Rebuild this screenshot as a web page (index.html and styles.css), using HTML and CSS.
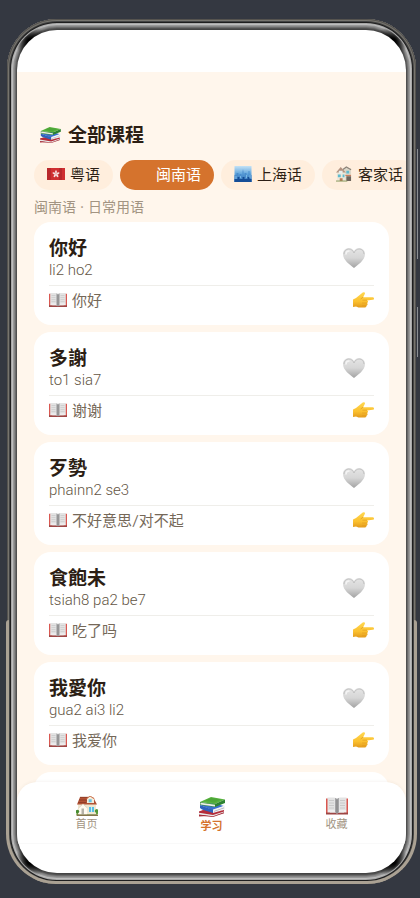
FILE: index.html
```html
<!DOCTYPE html>
<html lang="zh-CN">
<head>
  <meta charset="UTF-8">
  <meta name="viewport" content="width=device-width, initial-scale=1">
  <title>全部课程</title>
  <link rel="stylesheet" href="styles.css">
</head>
<body>
  <!-- icon sprites -->
  <svg class="sprites" aria-hidden="true">
    <defs>
      <linearGradient id="silver" x1="0" y1="0" x2="0" y2="1">
        <stop offset="0" stop-color="#e6e6e6"/>
        <stop offset="0.5" stop-color="#d6d6d6"/>
        <stop offset="1" stop-color="#a2a2a2"/>
      </linearGradient>
      <linearGradient id="skin" x1="0" y1="0" x2="0" y2="1">
        <stop offset="0" stop-color="#ffd850"/>
        <stop offset="0.6" stop-color="#fbc02f"/>
        <stop offset="1" stop-color="#e29a1c"/>
      </linearGradient>
      <linearGradient id="sky" x1="0" y1="0" x2="0" y2="1">
        <stop offset="0" stop-color="#c4e2f6"/>
        <stop offset="0.5" stop-color="#5fa4dc"/>
        <stop offset="1" stop-color="#1858a8"/>
      </linearGradient>
    </defs>
    <symbol id="books" viewBox="0 0 27 20">
      <path d="M1 15l9-3 16 1-9 5.500-16 1z" fill="#a82834"/>
      <path d="M1 15l13 2 12-4v3l-11 3.500L1 18z" fill="#e9e9e9"/>
      <path d="M1 14.500l4-1.500 11 2.500 10-2.500v1.500L15 18 1 15.700z" fill="#b52c3a"/>
      <path d="M1 17.500l14 1.800 11-4v1L15 20 1 18.500z" fill="#a02531"/>
      <path d="M2 8l13-2 11 3-11 4.500z" fill="#3b70cf"/>
      <path d="M2 8l13 5v3L4 12.500 2 11z" fill="#2f62bc"/>
      <path d="M15 12.500L27 8.500v4L15 16z" fill="#f3f3f3"/>
      <path d="M16 14l10-3.500v.7L16 14.700z" fill="#aab"/>
      <path d="M2 5L13 0l14 2.500L17 7z" fill="#57b23e"/>
      <path d="M7 3.500L13 1l10 1.500-7 3z" fill="#4da638"/>
      <path d="M17 7l10-4.500V6L17 10z" fill="#2c8230"/>
      <path d="M2 5l15 2v3L2 8z" fill="#3a9035"/>
      <path d="M2.500 5.700L17 7.800V9.500L2.500 7.500z" fill="#eeeeea"/>
    </symbol>
    <symbol id="book" viewBox="0 0 22 17">
      <path d="M0 1h4v15H0zM18 1h4v15h-4z" fill="#d95750"/>
      <path d="M0 15h10l1 1 1-1h10v2H0z" fill="#9d4644"/>
      <path d="M1.500 0H8q2.500 0 3 1.500Q11.500 0 14 0h6.500v15H13l-2 1-2-1H1.500z" fill="#e3e3e3"/>
      <path d="M9 0.500q1.500 0 2 1.200v14L9 15zM13 0.500q-1.500 0-2 1.200v14l2-.7z" fill="#a5a5a7"/>
      <path d="M10.700 2h.6v14h-.6z" fill="#666"/>
      <path d="M3 3h5M3 5.500h5M3 8h5M3 10.500h5M14 3h5M14 5.500h5M14 8h5M14 10.500h5" stroke="#c4c4c4" stroke-width=".8"/>
      <path d="M2 13.500h7M13 13.500h7" stroke="#fff" stroke-width=".8"/>
    </symbol>
    <symbol id="heart" viewBox="0 0 22 20">
      <path d="M11 20C7 16.500 0 12.500 0 6 0 2.500 2.500 0 5.800 0 8.200 0 10 1.200 11 3c1-1.800 2.800-3 5.200-3C19.500 0 22 2.500 22 6c0 6.500-7 10.500-11 14z" fill="url(#silver)"/>
      <path d="M1 6C1 3 3.200 1 5.800 1 8 1 9.800 2.200 11 5c1.200-2.800 3-4 5.200-4C18.800 1 21 3 21 6" fill="none" stroke="#bababa" stroke-width=".8"/>
      <path d="M3 6c0-2 1.500-3 3-3" fill="none" stroke="#f4f4f4" stroke-width="1.500" stroke-linecap="round"/>
    </symbol>
    <symbol id="hand" viewBox="0 0 21 16">
      <path d="M0 7.500L3 6 8.500 1.500Q10.500-.4 11.700.6c.8.8-.2 2.200-1.200 3.700l-.3.900h9.300c2 0 2 2.600 0 2.600L14 8.400c1.500.6 1.300 2.400 0 2.700 1 .8.700 2.200-.6 2.500.4 1.500-.9 2-2.400 2H5.500L3 14.600 0 15z" fill="url(#skin)"/>
      <path d="M14 8.200H9.500M14 11H9M13.300 13.500H9" stroke="#e09a20" stroke-width=".6" fill="none"/>
      <path d="M10.200 5l-2.500 2" stroke="#dd991f" stroke-width=".7"/>
    </symbol>
    <symbol id="house" viewBox="0 0 22 20">
      <path d="M0 16q2-3 4-1h15q1-3 3-1v4l-4 2H1z" fill="#68a43e"/>
      <path d="M2 8h18v10.500H2z" fill="#f0e8d2"/>
      <path d="M1 8.500L4 1h13l4 7.500z" fill="#b15235"/>
      <path d="M4 1.300h12M3 4h9M2 6.500h8" stroke="#8c3824" stroke-width=".8"/>
      <path d="M11 7V2.500L14 0l4 2.500V7z" fill="#f5eddb"/>
      <path d="M10.500 3L14 0l4.500 3" fill="none" stroke="#cf7650"/>
      <path d="M12.700 3.300h3v3h-3z" fill="#65c2e4"/>
      <path d="M3 12l4-4 4 4v6.500H3z" fill="#fffaf0"/>
      <path d="M2.500 12L7 8l4.500 4" fill="none" stroke="#e0d6c6" stroke-width="1"/>
      <path d="M5.500 12.500h2.500v6H5.500z" fill="#b5b2a8"/>
      <path d="M13 11h5v5h-5z" fill="#56bfe5"/>
      <path d="M15.500 11v5" stroke="#fff" stroke-width=".7"/>
      <path d="M0 18.500h22V20H1z" fill="#85754d"/>
      <circle cx="1.500" cy="15.500" r="1.700" fill="#488c32"/>
      <circle cx="20.500" cy="15" r="1.800" fill="#509638"/>
    </symbol>
    <symbol id="flag" viewBox="0 0 18 12">
      <path d="M0 0h18v12H0z" fill="#cf2e30"/>
      <path d="M0 0h4v12H0zM12 0h3v12h-3z" fill="#b8272b"/>
      <g fill="#f6dfdf">
        <ellipse cx="9" cy="4" rx=".9" ry="1.700"/>
        <ellipse cx="9" cy="4" rx=".9" ry="1.700" transform="rotate(72 9 6)"/>
        <ellipse cx="9" cy="4" rx=".9" ry="1.700" transform="rotate(144 9 6)"/>
        <ellipse cx="9" cy="4" rx=".9" ry="1.700" transform="rotate(216 9 6)"/>
        <ellipse cx="9" cy="4" rx=".9" ry="1.700" transform="rotate(288 9 6)"/>
      </g>
    </symbol>
    <symbol id="city" viewBox="0 0 17 16">
      <path d="M0 0h17v16H0z" fill="url(#sky)"/>
      <path d="M0 16V9h2V7h2v3h1V8h2v3h1V6l.5-3 .5 3v5h1V7h2v4h2V5h1v4h2v7z" fill="#4a8ccc"/>
      <path d="M0 16v-3h3v-2h2v2h3v-2h2v2h3v-2h2v2h2v3z" fill="#154d96"/>
      <path d="M1.500 10v3M6 10v2M12 9v3M15.500 9v3" stroke="#8dc8ed" stroke-width=".7"/>
    </symbol>
    <symbol id="houses" viewBox="0 0 17 17">
      <path d="M8 3l3-2 5 2v12H8z" fill="#dcd7c8"/>
      <path d="M7 4l4-3 5 3" fill="none" stroke="#8d8479" stroke-width="1.300"/>
      <path d="M1 7l4-5 5 5v9H1z" fill="#ede7d8"/>
      <path d="M0 7l5-6 5.500 6z" fill="#b3927f"/>
      <path d="M3 5h4v3H3z" fill="#e7f0ef"/>
      <path d="M2 9h3v3H2zM7 9h2v3H7zM11 5h3v3h-3z" fill="#5fbbcf"/>
      <path d="M11 11h5v5h-5z" fill="#6d645c"/>
      <path d="M10 10h6" stroke="#c86d4a"/>
      <path d="M4 13h3v3H4z" fill="#b97b55"/>
      <path d="M0 16h12" stroke="#829458" stroke-width="1"/>
    </symbol>
  </svg>

  <div class="phone">
    <span class="side-key volume"></span>
    <span class="side-key power"></span>
    <div class="screen">
      <div class="status-bar"></div>

      <main>
        <h1><svg><use href="#books"/></svg>全部课程</h1>

        <div class="chips">
          <button class="chip"><svg><use href="#flag"/></svg>粤语</button>
          <button class="chip active"><svg></svg>闽南语</button>
          <button class="chip"><svg><use href="#city"/></svg>上海话</button>
          <button class="chip"><svg><use href="#houses"/></svg>客家话</button>
        </div>

        <p class="subtitle">闽南语 · 日常用语</p>

        <div class="cards">
          <article class="card">
            <div class="card-top">
              <div>
                <h2 lang="zh-TW">你好</h2>
                <p class="pinyin">li2 ho2</p>
              </div>
              <button class="fav" aria-label="收藏"><svg><use href="#heart"/></svg></button>
            </div>
            <div class="card-bottom"><svg class="mean"><use href="#book"/></svg>你好<svg class="go"><use href="#hand"/></svg></div>
          </article>

          <article class="card">
            <div class="card-top">
              <div>
                <h2 lang="zh-TW">多謝</h2>
                <p class="pinyin">to1 sia7</p>
              </div>
              <button class="fav" aria-label="收藏"><svg><use href="#heart"/></svg></button>
            </div>
            <div class="card-bottom"><svg class="mean"><use href="#book"/></svg>谢谢<svg class="go"><use href="#hand"/></svg></div>
          </article>

          <article class="card">
            <div class="card-top">
              <div>
                <h2 lang="zh-TW">歹勢</h2>
                <p class="pinyin">phainn2 se3</p>
              </div>
              <button class="fav" aria-label="收藏"><svg><use href="#heart"/></svg></button>
            </div>
            <div class="card-bottom"><svg class="mean"><use href="#book"/></svg>不好意思/对不起<svg class="go"><use href="#hand"/></svg></div>
          </article>

          <article class="card">
            <div class="card-top">
              <div>
                <h2 lang="zh-TW">食飽未</h2>
                <p class="pinyin">tsiah8 pa2 be7</p>
              </div>
              <button class="fav" aria-label="收藏"><svg><use href="#heart"/></svg></button>
            </div>
            <div class="card-bottom"><svg class="mean"><use href="#book"/></svg>吃了吗<svg class="go"><use href="#hand"/></svg></div>
          </article>

          <article class="card">
            <div class="card-top">
              <div>
                <h2 lang="zh-TW">我愛你</h2>
                <p class="pinyin">gua2 ai3 li2</p>
              </div>
              <button class="fav" aria-label="收藏"><svg><use href="#heart"/></svg></button>
            </div>
            <div class="card-bottom"><svg class="mean"><use href="#book"/></svg>我爱你<svg class="go"><use href="#hand"/></svg></div>
          </article>

          <article class="card next"></article>
        </div>
      </main>

      <nav class="tabs">
        <a href="#home"><svg><use href="#house"/></svg>首页</a>
        <a href="#learn" class="active"><svg><use href="#books"/></svg>学习</a>
        <a href="#saved"><svg><use href="#book"/></svg>收藏</a>
      </nav>
      <div class="home-bar"></div>
    </div>
  </div>
</body>
</html>
```
FILE: styles.css
```css
* { box-sizing: border-box; margin: 0; padding: 0; }

body {
  height: 100vh;
  padding: 19px 4px 14px 7px;
  background: #343841;
  color: #2c1e14;
  font-family: Lato, "Noto Sans CJK SC", sans-serif;
  overflow: hidden;
}

button { border: 0; background: none; font: inherit; color: inherit; cursor: pointer; }
a { color: inherit; text-decoration: none; }
svg { display: block; flex: none; }
.sprites { position: absolute; width: 0; height: 0; }

/* phone body, metal rim made of rings */
.phone {
  position: relative;
  height: 100%;
  padding: 11px 10px;
  border-radius: 50px;
  background: #444;
  box-shadow:
    inset 0 0 0 1px #55534f,
    inset 0 0 0 2px #77756f,
    inset 0 0 0 3px #444,
    inset 0 0 0 4px #1e1e1e,
    inset 0 0 0 5px #a8a8a8,
    inset 0 0 0 6px #bdbdbd,
    inset 0 0 0 7px #999,
    inset 0 0 0 8px #858585,
    inset 0 0 0 9px #6a6a6a,
    inset 0 0 0 10px #505050;
}
/* dark reflections in the four corners */
.phone::before {
  content: "";
  position: absolute;
  inset: 5px;
  border-radius: 45px;
  background:
    radial-gradient(circle at 18px 17px, #000 2px, transparent 16px),
    radial-gradient(circle at calc(100% - 18px) 17px, #000 2px, transparent 16px),
    radial-gradient(circle at 18px calc(100% - 17px), #000 2px, transparent 16px),
    radial-gradient(circle at calc(100% - 18px) calc(100% - 17px), #000 2px, transparent 16px);
}
.phone::after {
  content: "";
  position: absolute;
  left: -1px;
  right: -1px;
  bottom: 0;
  height: 261px;
  border: 3px solid #aaa193;
  border-top: 0;
  border-radius: 3px 3px 50px 50px;
  pointer-events: none;
}
.side-key { position: absolute; right: -2px; width: 1px; background: #8b8e92; }
.volume { top: 130px; height: 110px; }
.power { top: 288px; height: 50px; }

.screen {
  position: relative;
  display: flex;
  flex-direction: column;
  height: 100%;
  border-radius: 40px;
  background: #fff;
  overflow: hidden;
}
.status-bar { flex: none; height: 42px; }

main {
  flex: 1;
  min-height: 0;
  padding: 49px 17px 0;
  background: #fff6ec;
  overflow: hidden;
}

h1 {
  display: flex;
  align-items: center;
  gap: 7px;
  padding-left: 5px;
  font-size: 19px;
  line-height: 28px;
}
h1 svg { width: 22px; height: 16px; }

.chips {
  display: flex;
  gap: 7px;
  margin: 11px -17px 0 0;
  overflow-x: auto;
  scrollbar-width: none;
}
.chip {
  display: flex;
  flex: none;
  align-items: center;
  gap: 5px;
  height: 30px;
  padding: 0 13px 2px;
  border-radius: 15px;
  background: #ffeedd;
  font-family: "Noto Sans CJK SC", sans-serif;
  font-size: 15px;
  line-height: 20px;
}
.chip svg { width: 18px; height: 16px; }
.chip.active { background: #d5732d; color: #fff; }

.subtitle {
  margin: 7px 0 5px;
  font-family: Inter, "Noto Sans CJK SC", sans-serif;
  font-size: 14px;
  line-height: 20px;
  color: #a29482;
}

.cards { display: flex; flex-direction: column; gap: 7px; }
.card {
  padding: 14px 15px 15px;
  border-radius: 17px;
  background: #fff;
}
.card.next { height: 103px; }
.card-top { display: flex; align-items: center; justify-content: space-between; }
h2 {
  font-family: Lato, "Noto Sans CJK TC", sans-serif;
  font-size: 19px;
  line-height: 24px;
}
.pinyin {
  font-family: Roboto, sans-serif;
  font-size: 15px;
  font-weight: 300;
  line-height: 20px;
  color: #635544;
}
.fav { display: flex; align-items: center; justify-content: center; width: 40px; height: 40px; }
.fav svg { width: 22px; height: 20px; }
.card-bottom {
  display: flex;
  align-items: center;
  gap: 5px;
  margin-top: 5px;
  padding-top: 4px;
  border-top: 1px solid #efeeea;
  font-size: 15px;
  line-height: 20px;
  color: #756858;
}
.mean { width: 18px; height: 14px; }
.go { width: 21px; height: 16px; margin-left: auto; }

.tabs {
  position: relative;
  display: flex;
  flex: none;
  height: 61px;
  margin-top: -20px;
  padding: 0 7px;
  border-radius: 20px 20px 0 0;
  background: #fff;
  box-shadow: 0 -1px 3px rgba(90, 60, 20, 0.05);
}
.tabs a {
  display: flex;
  flex: 1;
  flex-direction: column;
  align-items: center;
  padding-top: 14px;
  font-size: 11px;
  line-height: 16px;
  color: #a29482;
}
.tabs svg { width: 22px; height: 20px; }
.tabs .active { color: #d5732d; font-weight: bold; }
.tabs .active svg { width: 27px; height: 22px; }
.home-bar { flex: none; height: 30px; border-top: 1px solid #fafafa; }
```
